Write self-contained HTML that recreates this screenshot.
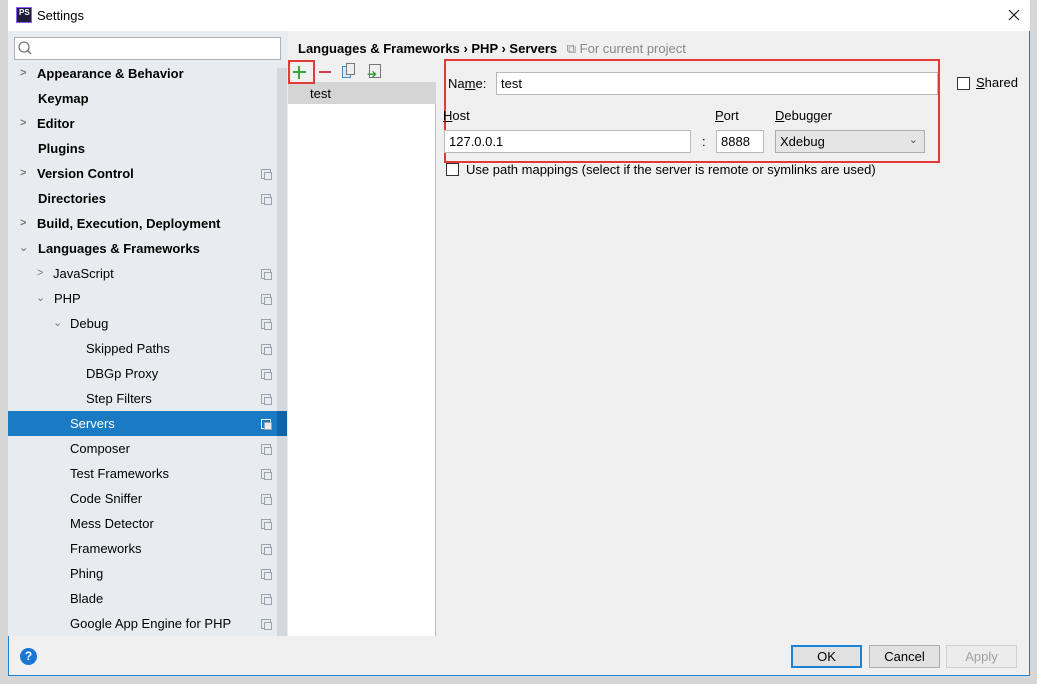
<!DOCTYPE html><html><head><style>
*{margin:0;padding:0;box-sizing:border-box}
body{width:1037px;height:684px;position:relative;background:#d6d6d6;font-family:"Liberation Sans","DejaVu Sans",sans-serif;font-size:13px;color:#000;overflow:hidden}
.abs{position:absolute}
#win{left:8px;top:0;width:1022px;height:676px;background:#f0f0f0;border:1px solid #1883d7;border-top:none}
#title{left:8px;top:0;width:1022px;height:31px;background:#fff}
#left{left:8px;top:31px;width:280px;height:605px;background:#e8ecf0}
.row{position:absolute;left:8px;width:269px;height:25px;line-height:25px;font-size:13px}
.b{font-weight:bold}
.ic{position:absolute;left:253px;top:8px;width:10px;height:10px;border:1px solid #9aa3ad}
.ic:after{content:"";position:absolute;left:2px;top:2px;width:6px;height:6px;border:1px solid #9aa3ad;background:#e8ecf0}
.arr{position:absolute;font-size:11px;color:#777}
.btn{position:absolute;top:645px;height:23px;width:71px;border:1px solid #adadad;background:#e1e1e1;text-align:center;line-height:21px;font-size:13px}
.inp{position:absolute;background:#fff;border:1px solid #b9b9b9;height:23px;line-height:21px;padding-left:4px;font-size:13px}
.cb{position:absolute;width:13px;height:13px;border:1px solid #333;background:#fff}
</style></head><body>
<div id="win" class="abs"></div>
<div id="title" class="abs"></div>
<div class="abs" style="left:16px;top:7px;width:16px;height:16px;background:#1f1f3a;border:1px solid #8b5cf6;color:#fff;font-size:8px;font-weight:bold;line-height:10px;padding-left:2px">PS</div>
<div class="abs" style="left:37px;top:8px;font-size:13px">Settings</div>
<svg class="abs" style="left:1008px;top:9px" width="12" height="12"><path d="M1 1L11 11M11 1L1 11" stroke="#222" stroke-width="1.2"/></svg>
<div id="left" class="abs"></div>
<div class="abs" style="left:14px;top:37px;width:267px;height:23px;background:#fff;border:1px solid #b0b0b0"></div>
<svg class="abs" style="left:17px;top:40px" width="16" height="16"><circle cx="7" cy="7" r="5" fill="none" stroke="#777" stroke-width="1.3"/><line x1="10.5" y1="10.5" x2="14" y2="14" stroke="#777" stroke-width="1.5"/></svg>
<div class="abs" style="left:277px;top:68px;width:10px;height:568px;background:#d4d8dc"></div>
<div class="abs" style="left:277px;top:411px;width:10px;height:25px;background:#0f63a8"></div>
<div class="row" style="top:411px;background:#1a7bc4;width:269px"></div>

<div class="row b" style="top:61px"><span class="arr" style="left:12px">&gt;</span><span style="position:absolute;left:29px">Appearance &amp; Behavior</span></div>
<div class="row b" style="top:86px"><span style="position:absolute;left:30px">Keymap</span></div>
<div class="row b" style="top:111px"><span class="arr" style="left:12px">&gt;</span><span style="position:absolute;left:29px">Editor</span></div>
<div class="row b" style="top:136px"><span style="position:absolute;left:30px">Plugins</span></div>
<div class="row b" style="top:161px"><span class="arr" style="left:12px">&gt;</span><span style="position:absolute;left:29px">Version Control</span><i class="ic"></i></div>
<div class="row b" style="top:186px"><span style="position:absolute;left:30px">Directories</span><i class="ic"></i></div>
<div class="row b" style="top:211px"><span class="arr" style="left:12px">&gt;</span><span style="position:absolute;left:29px">Build, Execution, Deployment</span></div>
<div class="row b" style="top:236px"><span class="arr" style="left:11px">⌄</span><span style="position:absolute;left:30px">Languages &amp; Frameworks</span></div>
<div class="row" style="top:261px"><span class="arr" style="left:29px">&gt;</span><span style="position:absolute;left:45px">JavaScript</span><i class="ic"></i></div>
<div class="row" style="top:286px"><span class="arr" style="left:28px">⌄</span><span style="position:absolute;left:46px">PHP</span><i class="ic"></i></div>
<div class="row" style="top:311px"><span class="arr" style="left:45px">⌄</span><span style="position:absolute;left:62px">Debug</span><i class="ic"></i></div>
<div class="row" style="top:336px"><span style="position:absolute;left:78px">Skipped Paths</span><i class="ic"></i></div>
<div class="row" style="top:361px"><span style="position:absolute;left:78px">DBGp Proxy</span><i class="ic"></i></div>
<div class="row" style="top:386px"><span style="position:absolute;left:78px">Step Filters</span><i class="ic"></i></div>
<div class="row" style="top:411px;color:#fff"><span style="position:absolute;left:62px">Servers</span><i class="ic" style="border-color:#fff"></i></div>
<div class="row" style="top:436px"><span style="position:absolute;left:62px">Composer</span><i class="ic"></i></div>
<div class="row" style="top:461px"><span style="position:absolute;left:62px">Test Frameworks</span><i class="ic"></i></div>
<div class="row" style="top:486px"><span style="position:absolute;left:62px">Code Sniffer</span><i class="ic"></i></div>
<div class="row" style="top:511px"><span style="position:absolute;left:62px">Mess Detector</span><i class="ic"></i></div>
<div class="row" style="top:536px"><span style="position:absolute;left:62px">Frameworks</span><i class="ic"></i></div>
<div class="row" style="top:561px"><span style="position:absolute;left:62px">Phing</span><i class="ic"></i></div>
<div class="row" style="top:586px"><span style="position:absolute;left:62px">Blade</span><i class="ic"></i></div>
<div class="row" style="top:611px"><span style="position:absolute;left:62px">Google App Engine for PHP</span><i class="ic"></i></div>

<div class="abs b" style="left:298px;top:41px;font-size:13px;font-weight:bold">Languages &amp; Frameworks › PHP › Servers <span style="font-weight:normal;color:#888;margin-left:6px">⧉ For current project</span></div>

<div class="abs" style="left:288px;top:60px;width:148px;height:576px;background:#fff;border-right:1px solid #bbb"></div>
<div class="abs" style="left:288px;top:60px;width:148px;height:22px;background:#f0f0f0"></div>
<div class="abs" style="left:288px;top:82px;width:148px;height:22px;background:#d5d5d5"></div>
<div class="abs" style="left:310px;top:86px">test</div>
<div class="abs" style="left:288px;top:60px;width:27px;height:24px;border:2px solid #e53935"></div>
<div class="abs" style="left:293px;top:71px;width:13px;height:2px;background:#3aa53a"></div>
<div class="abs" style="left:298px;top:66px;width:2px;height:13px;background:#3aa53a"></div>
<div class="abs" style="left:319px;top:71px;width:12px;height:2px;background:#d04040"></div>
<div class="abs" style="left:342px;top:66px;width:9px;height:12px;border:1px solid #4a88c7;background:#dde8f3"></div>
<div class="abs" style="left:346px;top:63px;width:9px;height:12px;border:1px solid #777;background:#eee"></div>
<div class="abs" style="left:369px;top:64px;width:12px;height:14px;border:1px solid #777"></div>
<div class="abs" style="left:367px;top:67px;color:#2a9a2a;font-size:12px;font-weight:bold">➔</div>

<div class="abs" style="left:444px;top:59px;width:496px;height:104px;border:2px solid #e53935"></div>
<div class="abs" style="left:448px;top:76px">Na<u>m</u>e:</div>
<div class="inp" style="left:496px;top:72px;width:442px">test</div>
<div class="cb" style="left:957px;top:77px"></div>
<div class="abs" style="left:976px;top:75px"><u>S</u>hared</div>
<div class="abs" style="left:443px;top:108px"><u>H</u>ost</div>
<div class="abs" style="left:715px;top:108px"><u>P</u>ort</div>
<div class="abs" style="left:775px;top:108px"><u>D</u>ebugger</div>
<div class="inp" style="left:444px;top:130px;width:247px">127.0.0.1</div>
<div class="abs" style="left:702px;top:134px">:</div>
<div class="inp" style="left:716px;top:130px;width:48px">8888</div>
<div class="inp" style="left:775px;top:130px;width:150px;background:#e5e5e5;border-color:#adadad">Xdebug<span style="position:absolute;right:6px;top:-1px;font-size:11px;color:#555">⌄</span></div>
<div class="cb" style="left:446px;top:163px"></div>
<div class="abs" style="left:466px;top:162px">Use path mappings (select if the server is remote or symlinks are used)</div>

<div class="abs" style="left:20px;top:648px;width:17px;height:17px;border-radius:50%;background:#1976d2;color:#fff;font-weight:bold;text-align:center;line-height:17px;font-size:12px">?</div>
<div class="btn" style="left:791px;border:2px solid #1883d7;line-height:19px">OK</div>
<div class="btn" style="left:869px">Cancel</div>
<div class="btn" style="left:946px;color:#a0a0a0;background:#ececec;border-color:#d0d0d0">Apply</div>
</body></html>
